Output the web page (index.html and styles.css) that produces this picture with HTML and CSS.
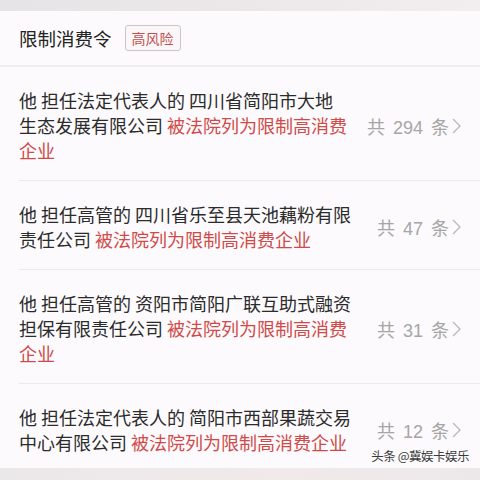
FILE: index.html
```html
<!DOCTYPE html>
<html lang="zh">
<head>
<meta charset="utf-8">
<link rel="stylesheet" href="styles.css">
</head>
<body>
<div class="page">
  <div class="topstrip"></div>
  <div class="header">
    <span class="title">限制消费令</span>
    <span class="badge">高风险</span>
  </div>
  <div class="list">
    <div class="row">
      <div class="text">他 担任法定代表人的 四川省简阳市大地<br>生态发展有限公司 <span class="red">被法院列为限制高消费<br>企业</span></div>
      <div class="count">共 294 条<svg class="chev" width="9" height="16" viewBox="0 0 9 16"><polyline points="1,1 8,8 1,15" fill="none" stroke="#b9b9b9" stroke-width="1.3"/></svg></div>
    </div>
    <div class="row">
      <div class="text">他 担任高管的 四川省乐至县天池藕粉有限<br>责任公司 <span class="red">被法院列为限制高消费企业</span></div>
      <div class="count">共 47 条<svg class="chev" width="9" height="16" viewBox="0 0 9 16"><polyline points="1,1 8,8 1,15" fill="none" stroke="#b9b9b9" stroke-width="1.3"/></svg></div>
    </div>
    <div class="row">
      <div class="text">他 担任高管的 资阳市简阳广联互助式融资<br>担保有限责任公司 <span class="red">被法院列为限制高消费<br>企业</span></div>
      <div class="count">共 31 条<svg class="chev" width="9" height="16" viewBox="0 0 9 16"><polyline points="1,1 8,8 1,15" fill="none" stroke="#b9b9b9" stroke-width="1.3"/></svg></div>
    </div>
    <div class="row last">
      <div class="text">他 担任法定代表人的 简阳市西部果蔬交易<br>中心有限公司 <span class="red">被法院列为限制高消费企业</span></div>
      <div class="count">共 12 条<svg class="chev" width="9" height="16" viewBox="0 0 9 16"><polyline points="1,1 8,8 1,15" fill="none" stroke="#b9b9b9" stroke-width="1.3"/></svg></div>
    </div>
  </div>
  <div class="bottomstrip"></div>
  <div class="watermark">头条 @冀娱卡娱乐</div>
</div>
</body>
</html>
```
FILE: styles.css
```css
* { box-sizing: border-box; }
html, body { margin: 0; padding: 0; }
body {
  width: 480px;
  height: 480px;
  overflow: hidden;
  background: #fcfafc;
  font-family: "Noto Sans CJK SC", "Noto Sans", sans-serif;
  color: #2b2b2b;
}
.page {
  position: relative;
  width: 480px;
  height: 480px;
  display: flex;
  flex-direction: column;
}
.topstrip {
  flex-shrink: 0;
  height: 11px;
  background: linear-gradient(to right, #e6e4e6, #ece8ea 50%, #f2eef0);
}
.header {
  flex-shrink: 0;
  height: 56px;
  display: flex;
  align-items: center;
  padding-left: 19px;
  gap: 13px;
  border-bottom: 2px solid #efedef;
}
.title {
  font-size: 18.5px;
  line-height: 24px;
  color: #222;
}
.badge {
  font-size: 14px;
  line-height: 22px;
  color: #c0504f;
  border: 1px solid #c9c6c8;
  border-radius: 3px;
  padding: 1px 6px;
  background: #fbf7f8;
}
.list {
  flex: 1;
  min-height: 0;
  overflow: hidden;
  padding-left: 19px;
}
.row {
  display: flex;
  align-items: center;
  padding: 21px 0 17px;
  border-bottom: 1px solid #ecebec;
}
.row.last { border-bottom: none; }
.text {
  flex: 1;
  font-size: 18px;
  line-height: 25px;
  color: #2b2b2b;
  white-space: nowrap;
}
.red { color: #d04a48; }
.count {
  display: flex;
  align-items: center;
  gap: 3px;
  padding-right: 19px;
  font-family: "Liberation Sans", "Noto Sans CJK SC", sans-serif;
  font-size: 18px;
  word-spacing: 3px;
  color: #a6a6a6;
  white-space: nowrap;
}
.chev { display: block; }
.bottomstrip {
  flex-shrink: 0;
  height: 12px;
  background: linear-gradient(to right, #ebe8ea, #f1e9ea 60%, #ece8ea);
}
.watermark {
  position: absolute;
  right: 11px;
  top: 446px;
  font-size: 12.5px;
  color: #3a3a3a;
  letter-spacing: -0.5px;
}
```
